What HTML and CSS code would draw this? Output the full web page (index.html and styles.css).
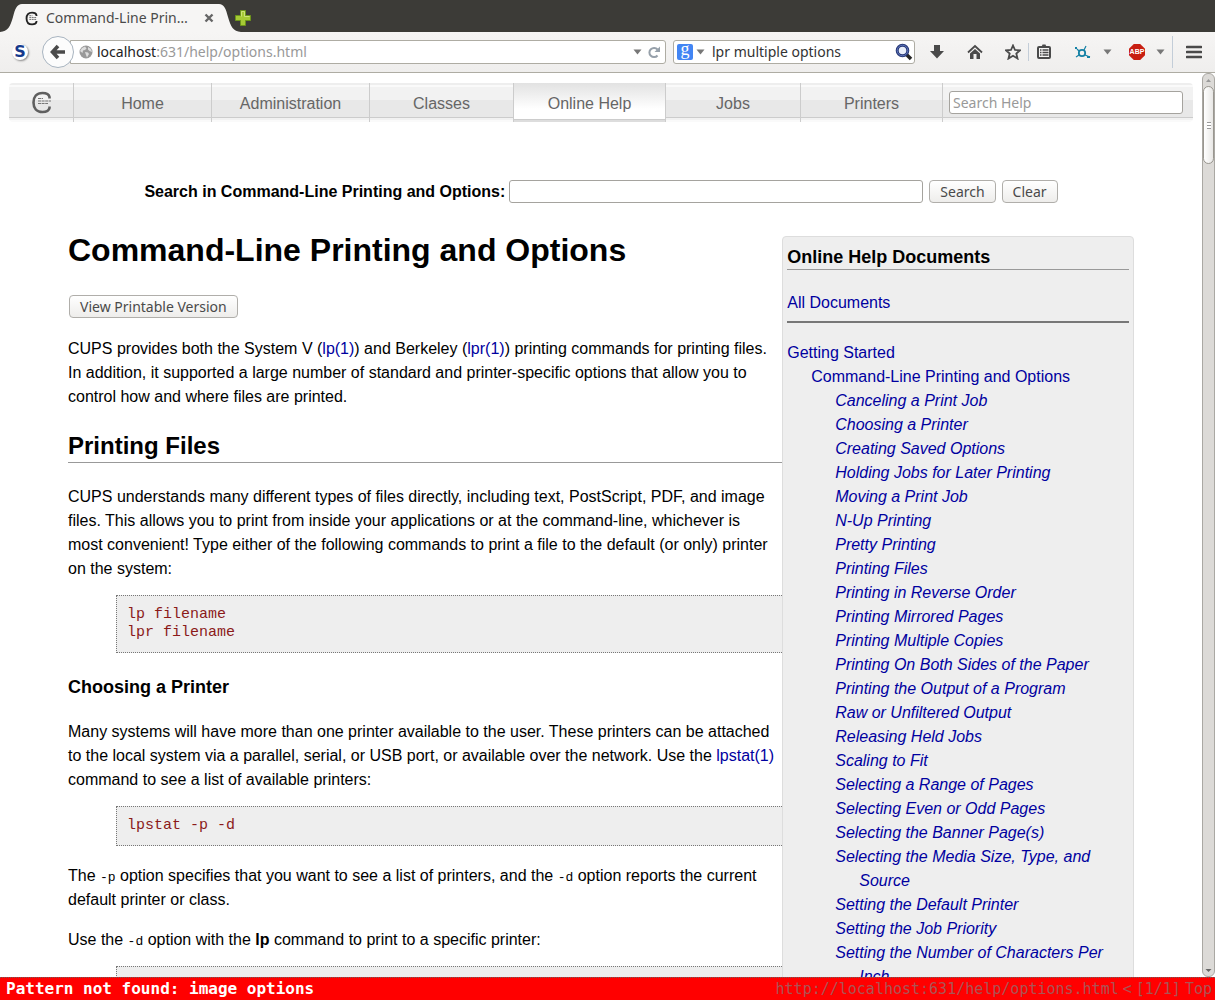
FILE: index.html
```html
<!DOCTYPE html>
<html lang="en">
<head>
<meta charset="utf-8">
<title>Command-Line Printing and Options</title>
<link rel="stylesheet" href="styles.css">
</head>
<body>
<header class="chrome">
  <div class="tabs">
    <svg class="tab-edge" viewBox="0 0 22 28" aria-hidden="true"><path d="M0 28C8 27 10 23 13 13C15 5 17 0 22 0V28Z"/></svg>
    <div class="tab">
      <svg class="favicon" viewBox="0 0 21 23" aria-hidden="true"><path d="M18.500 7.500V6C18 3.500 15.500 2 11.500 2C5.500 2 2.500 6 2.500 11.500S5.500 21 11.500 21C15.500 21 18 19.500 18.500 17V15.500" fill="none" stroke="#222" stroke-width="3"/><path d="M7 7H12M7 10H19M7 13H19" stroke="#666" stroke-width="1.500" stroke-dasharray="3 1"/></svg>
      <span class="tab-title">Command-Line Prin…</span>
      <button class="icon-btn" aria-label="Close tab"><svg width="10" height="10" viewBox="0 0 10 10"><path d="M1.500 1.500L8.500 8.500M8.500 1.500L1.500 8.500" stroke="#666" stroke-width="2.400"/></svg></button>
    </div>
    <svg class="tab-edge" viewBox="0 0 22 28" aria-hidden="true"><path d="M0 0C5 0 7 5 9 13C12 23 14 27 22 28H0Z"/></svg>
    <button class="icon-btn" aria-label="New tab"><svg width="16" height="16" viewBox="0 0 16 16"><path d="M5.500 .5H10.500V5.500H15.500V10.500H10.500V15.500H5.500V10.500H.5V5.500H5.500Z" fill="#a6ca35" stroke="#6d941a"/><path d="M6.500 6.500V1.500H9.500V6.500H14.500" fill="none" stroke="#cde278"/></svg></button>
  </div>
  <div class="toolbar">
    <button class="icon-btn s-btn" aria-label="S"><span class="s-letter">S</span></button>
    <button class="back" aria-label="Back"><svg width="18" height="18" viewBox="0 0 18 18"><path d="M9 3L3.500 9L9 15M4 9H16" fill="none" stroke="#4a4a4a" stroke-width="3.600"/></svg></button>
    <div class="location">
      <svg width="14" height="14" viewBox="0 0 14 14" aria-hidden="true"><circle cx="7" cy="7" r="6.500" fill="#999"/><path d="M1 6L3 3L6 1.500L7.500 3.500L6 5L4 5.500L3.500 8ZM6 7L9 7.500L10 9L8 12.500L7 10ZM9 2L12 4L13 7L10.500 6L9 4.500Z" fill="#ddd"/></svg>
      <span class="url"><b>localhost</b>:631/help/options.html</span>
      <svg class="caret" viewBox="0 0 9 6"><path d="M.5 .5H8.500L4.500 5.500Z"/></svg>
      <svg width="13" height="13" viewBox="0 0 13 13"><path d="M9.500 9.500A4.600 4.600 0 1 1 9.500 3.500" fill="none" stroke="#96a0aa" stroke-width="2"/><path d="M12 .5V6H6.500Z" fill="#96a0aa"/></svg>
    </div>
    <div class="searchbar">
      <span class="google">g</span>
      <svg class="caret" viewBox="0 0 9 6"><path d="M.5 .5H8.500L4.500 5.500Z"/></svg>
      <input class="web-search" aria-label="Web search" value="lpr multiple options">
      <svg width="18" height="18" viewBox="0 0 18 18"><path d="M11 11L16 16" stroke="#252525" stroke-width="3.500"/><circle cx="7.500" cy="7.500" r="5.300" fill="#e8eefa" stroke="#263776" stroke-width="3"/><circle cx="7.500" cy="7.500" r="5.300" fill="none" stroke="#6178bd"/></svg>
    </div>
    <div class="tools">
      <svg width="16" height="16" viewBox="0 0 16 16"><path d="M5 1H11V7H15L8 14.500L1 7H5Z"/></svg>
      <svg class="home" width="16" height="16" viewBox="0 0 16 16"><path d="M1 8.500L8 2L15 8.500" fill="none" stroke="#4a4a4a" stroke-width="1.800"/><path d="M3 9.500L8 5L13 9.500V15H9.500V10H6.500V15H3Z"/></svg>
      <svg class="star" width="16" height="16" viewBox="0 0 16 16"><path d="M8 1.500L10 6L15 6.300L11.300 9.500L12.500 14.500L8 11.700L3.500 14.500L4.700 9.500L1 6.300L6 6Z" fill="none" stroke="#4a4a4a" stroke-width="1.800"/></svg>
      <span class="rule"></span>
      <svg width="14" height="16" viewBox="0 0 14 16"><path d="M4.500 3L5.500 .5H8.500L9.500 3Z"/><rect x="1" y="3" width="12" height="11" rx="1" fill="#f6f5f4" stroke="#4a4a4a" stroke-width="2"/><path d="M3 6H4.500M5.500 6H11.500M3 8.500H4.500M5.500 8.500H11.500M3 11H4.500M5.500 11H11.500" stroke="#4a4a4a" stroke-width="1.400"/></svg>
      <svg class="orbit" width="16" height="14" viewBox="0 0 16 14"><circle cx="7" cy="8" r="3.200" fill="none" stroke="#1581a5" stroke-width="1.800"/><path d="M9 5L11 1M10 10L15 12M4 10L1 12M4 6L2 4" stroke="#1581a5" stroke-width="1.200"/><path d="M0 2H2V4H0ZM12 11H15V13H12Z" fill="#1581a5"/></svg>
      <svg class="caret" viewBox="0 0 9 6"><path d="M.5 .5H8.500L4.500 5.500Z"/></svg>
      <span class="abp">ABP</span>
      <svg class="caret" viewBox="0 0 9 6"><path d="M.5 .5H8.500L4.500 5.500Z"/></svg>
      <span class="rule tall"></span>
      <svg width="16" height="14" viewBox="0 0 16 14"><path d="M1 2H15M1 7H15M1 12H15" stroke="#4a4a4a" stroke-width="2.600" stroke-linecap="round"/></svg>
    </div>
  </div>
</header>

<div class="viewport">
  <div class="page">
    <nav class="nav">
      <a class="logo" href="#" aria-label="CUPS"><svg width="21" height="23" viewBox="0 0 21 23"><path d="M18.500 7.500V6C18 3.500 15.500 2 11.500 2C5.500 2 2.500 6 2.500 11.500S5.500 21 11.500 21C15.500 21 18 19.500 18.500 17V15.500" fill="none" stroke="#5f5f5f" stroke-width="2.600"/><path d="M7 7.500H12M7 10H20M7 12.500H17" stroke="#777" stroke-width="1.200" stroke-dasharray="3 .6"/></svg></a>
      <a href="#">Home</a>
      <a href="#">Administration</a>
      <a href="#">Classes</a>
      <a href="#" class="active">Online Help</a>
      <a href="#">Jobs</a>
      <a href="#">Printers</a>
      <div class="nav-search"><input aria-label="Search Help" placeholder="Search Help"></div>
    </nav>
    <form class="doc-search">
      <label for="q">Search in Command-Line Printing and Options:</label>
      <input id="q">
      <button type="button">Search</button>
      <button type="button">Clear</button>
    </form>
    <div class="columns">
      <main class="doc">
        <h1>Command-Line Printing and Options</h1>
        <button>View Printable Version</button>
        <p>CUPS provides both the System V (<a href="#">lp(1)</a>) and Berkeley (<a href="#">lpr(1)</a>) printing commands for printing files. In addition, it supported a large number of standard and printer-specific options that allow you to control how and where files are printed.</p>
        <h2>Printing Files</h2>
        <p>CUPS understands many different types of files directly, including text, PostScript, PDF, and image files. This allows you to print from inside your applications or at the command-line, whichever is most convenient! Type either of the following commands to print a file to the default (or only) printer on the system:</p>
        <pre>lp filename
lpr filename</pre>
        <h3>Choosing a Printer</h3>
        <p>Many systems will have more than one printer available to the user. These printers can be attached to the local system via a parallel, serial, or USB port, or available over the network. Use the <a href="#">lpstat(1)</a> command to see a list of available printers:</p>
        <pre>lpstat -p -d</pre>
        <p>The <code>-p</code> option specifies that you want to see a list of printers, and the <code>-d</code> option reports the current default printer or class.</p>
        <p>Use the <code>-d</code> option with the <b>lp</b> command to print to a specific printer:</p>
        <pre></pre>
      </main>
      <aside class="sidebar">
        <h3>Online Help Documents</h3>
        <a class="all" href="#">All Documents</a>
        <hr>
        <ul>
          <li><a href="#">Getting Started</a></li>
          <li class="l2"><a href="#">Command-Line Printing and Options</a></li>
          <li class="l3"><a href="#">Canceling a Print Job</a></li>
          <li class="l3"><a href="#">Choosing a Printer</a></li>
          <li class="l3"><a href="#">Creating Saved Options</a></li>
          <li class="l3"><a href="#">Holding Jobs for Later Printing</a></li>
          <li class="l3"><a href="#">Moving a Print Job</a></li>
          <li class="l3"><a href="#">N-Up Printing</a></li>
          <li class="l3"><a href="#">Pretty Printing</a></li>
          <li class="l3"><a href="#">Printing Files</a></li>
          <li class="l3"><a href="#">Printing in Reverse Order</a></li>
          <li class="l3"><a href="#">Printing Mirrored Pages</a></li>
          <li class="l3"><a href="#">Printing Multiple Copies</a></li>
          <li class="l3"><a href="#">Printing On Both Sides of the Paper</a></li>
          <li class="l3"><a href="#">Printing the Output of a Program</a></li>
          <li class="l3"><a href="#">Raw or Unfiltered Output</a></li>
          <li class="l3"><a href="#">Releasing Held Jobs</a></li>
          <li class="l3"><a href="#">Scaling to Fit</a></li>
          <li class="l3"><a href="#">Selecting a Range of Pages</a></li>
          <li class="l3"><a href="#">Selecting Even or Odd Pages</a></li>
          <li class="l3"><a href="#">Selecting the Banner Page(s)</a></li>
          <li class="l3"><a href="#">Selecting the Media Size, Type, and Source</a></li>
          <li class="l3"><a href="#">Setting the Default Printer</a></li>
          <li class="l3"><a href="#">Setting the Job Priority</a></li>
          <li class="l3"><a href="#">Setting the Number of Characters Per Inch</a></li>
        </ul>
      </aside>
    </div>
  </div>
  <div class="scrollbar" aria-hidden="true">
    <svg class="arrow" viewBox="0 0 11 12"><path d="M3 8H8L5.500 5Z" fill="#999"/></svg>
    <span class="thumb"></span>
    <span class="track"></span>
    <svg class="arrow" viewBox="0 0 11 12"><path d="M2.500 5H8.500L5.500 8Z" fill="#666"/></svg>
  </div>
</div>

<footer class="status">
  <strong>Pattern not found: image options</strong>
  <div class="where"><span>http://localhost:631/help/options.html</span><span>&lt;</span><span>[1/1]</span><span>Top</span></div>
</footer>
</body>
</html>
```
FILE: styles.css
```css
* { box-sizing: border-box; }

body {
  margin: 0;
  height: 100vh;
  display: flex;
  flex-direction: column;
  overflow: hidden;
  background: #fff;
  color: #000;
  font: 16px/24px "Liberation Sans", Arial, sans-serif;
}

a { color: #0000a0; text-decoration: none; }
svg { display: block; flex: none; }

/* Browser chrome */
.chrome { flex: none; font: 14px/20px "Noto Sans", "Open Sans", sans-serif; color: #4a4a4a; }
.tabs { display: flex; align-items: center; height: 32px; padding-top: 4px; background: #3c3b37; }
.tab-edge { width: 22px; height: 28px; fill: #f6f5f4; }
.tab {
  display: flex;
  align-items: center;
  gap: 8px;
  width: 197px;
  height: 28px;
  padding: 0 5px 0 3px;
  background: #f6f5f4;
}
.favicon { width: 13px; height: 15px; }
.tab-title { flex: 1; white-space: nowrap; }
.icon-btn { border: 0; padding: 0; background: none; color: inherit; }
.tabs > .icon-btn { margin-left: -6px; }
.toolbar {
  display: flex;
  align-items: center;
  height: 41px;
  padding: 0 13px 0 12px;
  background: linear-gradient(#f6f5f4, #efeeed);
  border-bottom: 1px solid #aeaca3;
}
.s-btn { width: 16px; height: 16px; border-radius: 8px; background: #fff; box-shadow: 1px 1px 2px #888; }
.s-letter { display: block; font: bold 16px/16px "DejaVu Sans", sans-serif; color: #153a8c; }
.back {
  display: grid;
  place-items: center;
  flex: none;
  width: 32px;
  height: 32px;
  margin-left: 14px;
  padding: 0;
  border: 1px solid #a8b4c0;
  border-radius: 16px;
  background: #fcfcfc;
  z-index: 1;
}
.location {
  display: flex;
  align-items: center;
  gap: 6px;
  flex: 1;
  height: 24px;
  margin-left: -4px;
  padding: 0 4px 0 8px;
  border: 1px solid #aeaca3;
  border-radius: 0 3px 3px 0;
  background: #fff;
}
.url { flex: 1; margin-left: -2px; color: #999; }
.url b { font-weight: normal; color: #222; }
.caret { width: 9px; height: 6px; fill: #777; }
.searchbar {
  display: flex;
  align-items: center;
  gap: 3px;
  width: 242px;
  height: 24px;
  margin-left: 7px;
  padding: 0 1px 0 3px;
  border: 1px solid #aeaca3;
  border-radius: 3px;
  background: #fff;
}
.google {
  width: 16px;
  height: 16px;
  border-radius: 2px;
  background: #4285f4;
  color: #fff;
  font: 18px/11px "Liberation Serif", serif;
  text-align: center;
}
.web-search { flex: 1; min-width: 0; border: 0; padding: 0 0 0 4px; background: none; color: #333; font: inherit; }
.tools { display: flex; align-items: center; margin-left: 14px; fill: #4a4a4a; }
.home { margin: 0 22px; }
.rule { width: 1px; height: 18px; margin: 0 8px 0 7px; background: #c3cdd8; }
.orbit { margin: 0 12px 0 24px; }
.abp {
  width: 16px;
  height: 16px;
  margin: 0 11px 0 17px;
  clip-path: polygon(30% 0, 70% 0, 100% 30%, 100% 70%, 70% 100%, 30% 100%, 0 70%, 0 30%);
  background: #c81f12;
  color: #fff;
  font: bold 7px/16px "Liberation Sans", sans-serif;
  text-align: center;
}
.rule.tall { height: 32px; margin: 0 13px 0 7px; }

/* Web page */
.viewport { flex: 1; min-height: 0; display: flex; }
.page { flex: 1; min-width: 0; overflow: hidden; padding: 10px 9px 0; }

.nav {
  display: grid;
  grid-template-columns: 65fr 138fr 158fr 144fr 152fr 135fr 142fr 250fr;
  height: 39px;
  border-radius: 4px;
  background: linear-gradient(#eee 0 2px, #fafafa 2px 4px, #f2f2f2 4px 17px, #e8e8e8 17px 34px, #ccc 34px 35px, #f2f2f2 35px 37px, #fafafa 37px);
}
.nav a { padding-top: 2px; border-right: 1px solid #ccc; color: #666; line-height: 37px; text-align: center; }
.nav .logo { display: grid; place-items: center; padding: 0; }
.nav .active { background: linear-gradient(#e2e2e2, #fff 26px 36px, #ccc 36px 37px, #ddd 37px); }
.nav-search { padding: 8px 10px 0 6px; }

input, .doc button { font-family: "Noto Sans", "Open Sans", sans-serif; }
.nav-search input, .doc-search input {
  display: block;
  width: 100%;
  height: 23px;
  padding: 0 3px;
  border: 1px solid #a5a39e;
  border-radius: 3px;
  background: #fff;
  font-size: 14px;
}
.nav-search input::placeholder { color: #999; }

.doc-search { display: flex; justify-content: center; align-items: center; margin-top: 58px; height: 23px; }
.doc-search label { font-weight: bold; }
.doc-search input { width: 414px; margin-left: 4px; }
.doc-search button, .doc button {
  height: 23px;
  padding: 0 10px;
  border: 1px solid #b0aeaa;
  border-radius: 4px;
  background: linear-gradient(#fff, #eeedeb);
  color: #4a4a4a;
  font: 14px/20px "Noto Sans", "Open Sans", sans-serif;
}
.doc-search button { margin-left: 6px; }

.columns { display: grid; grid-template-columns: 67fr 33fr; align-items: start; padding: 27px 59px 0; }
.doc { min-width: 0; }
.doc h1 { margin: 0 0 25px; font-size: 32px; line-height: 40px; }
.doc > button { display: block; margin: 0 0 19px 1px; }
.doc p { margin: 0 4px 16px 0; }
.doc h2 { margin: 22px 0; padding-bottom: 1px; border-bottom: 1px solid #999; font-size: 24px; line-height: 30px; }
h3 { margin: 0; font-size: 18px; line-height: 24px; }
.doc h3 { margin: 22px 0 21px; }
pre {
  min-height: 40px;
  margin: -2px 0 18px 48px;
  padding: 10px;
  border: 1px dotted #777;
  border-right: 0;
  background: #eee;
  color: #8b1a1a;
  font: 15px/18px "Liberation Mono", monospace;
}
code { font: 13px/18px "Liberation Mono", monospace; }

.sidebar { margin-top: 6px; padding: 8px 4px; border: 1px solid #ddd; border-radius: 4px; background: #eee; }
.sidebar h3 { border-bottom: 1px solid #999; }
.all { display: block; margin-top: 21px; }
.sidebar hr { margin: 6px 0 18px; border: 0; border-top: 2px solid #777; }
.sidebar ul { margin: 0; padding: 0; list-style: none; }
.l2 { padding-left: 24px; }
.l3 { padding-left: 72px; text-indent: -24px; font-style: italic; }

.scrollbar {
  display: flex;
  flex-direction: column;
  width: 13px;
  border: 1px solid #aaa8a3;
  border-radius: 6px;
  background: #dcdad7;
}
.arrow { width: 11px; height: 12px; }
.thumb {
  height: 78px;
  border: 1px solid #99968f;
  border-radius: 6px;
  background:
    repeating-linear-gradient(#999 0 1px, #fff 1px 3px) center / 4px 7px no-repeat,
    linear-gradient(90deg, #fff, #e8e7e5);
}
.track { flex: 1; }

/* Status line */
.status {
  flex: none;
  display: flex;
  justify-content: space-between;
  align-items: center;
  height: 23px;
  padding: 0 3px 0 6px;
  border-top: 1px dotted #666;
  background: #f00;
  color: #fff;
  font: 16px/22px "DejaVu Sans Mono", monospace;
}
.where { display: flex; gap: 4px; color: #a55; font-size: 15px; }
```
